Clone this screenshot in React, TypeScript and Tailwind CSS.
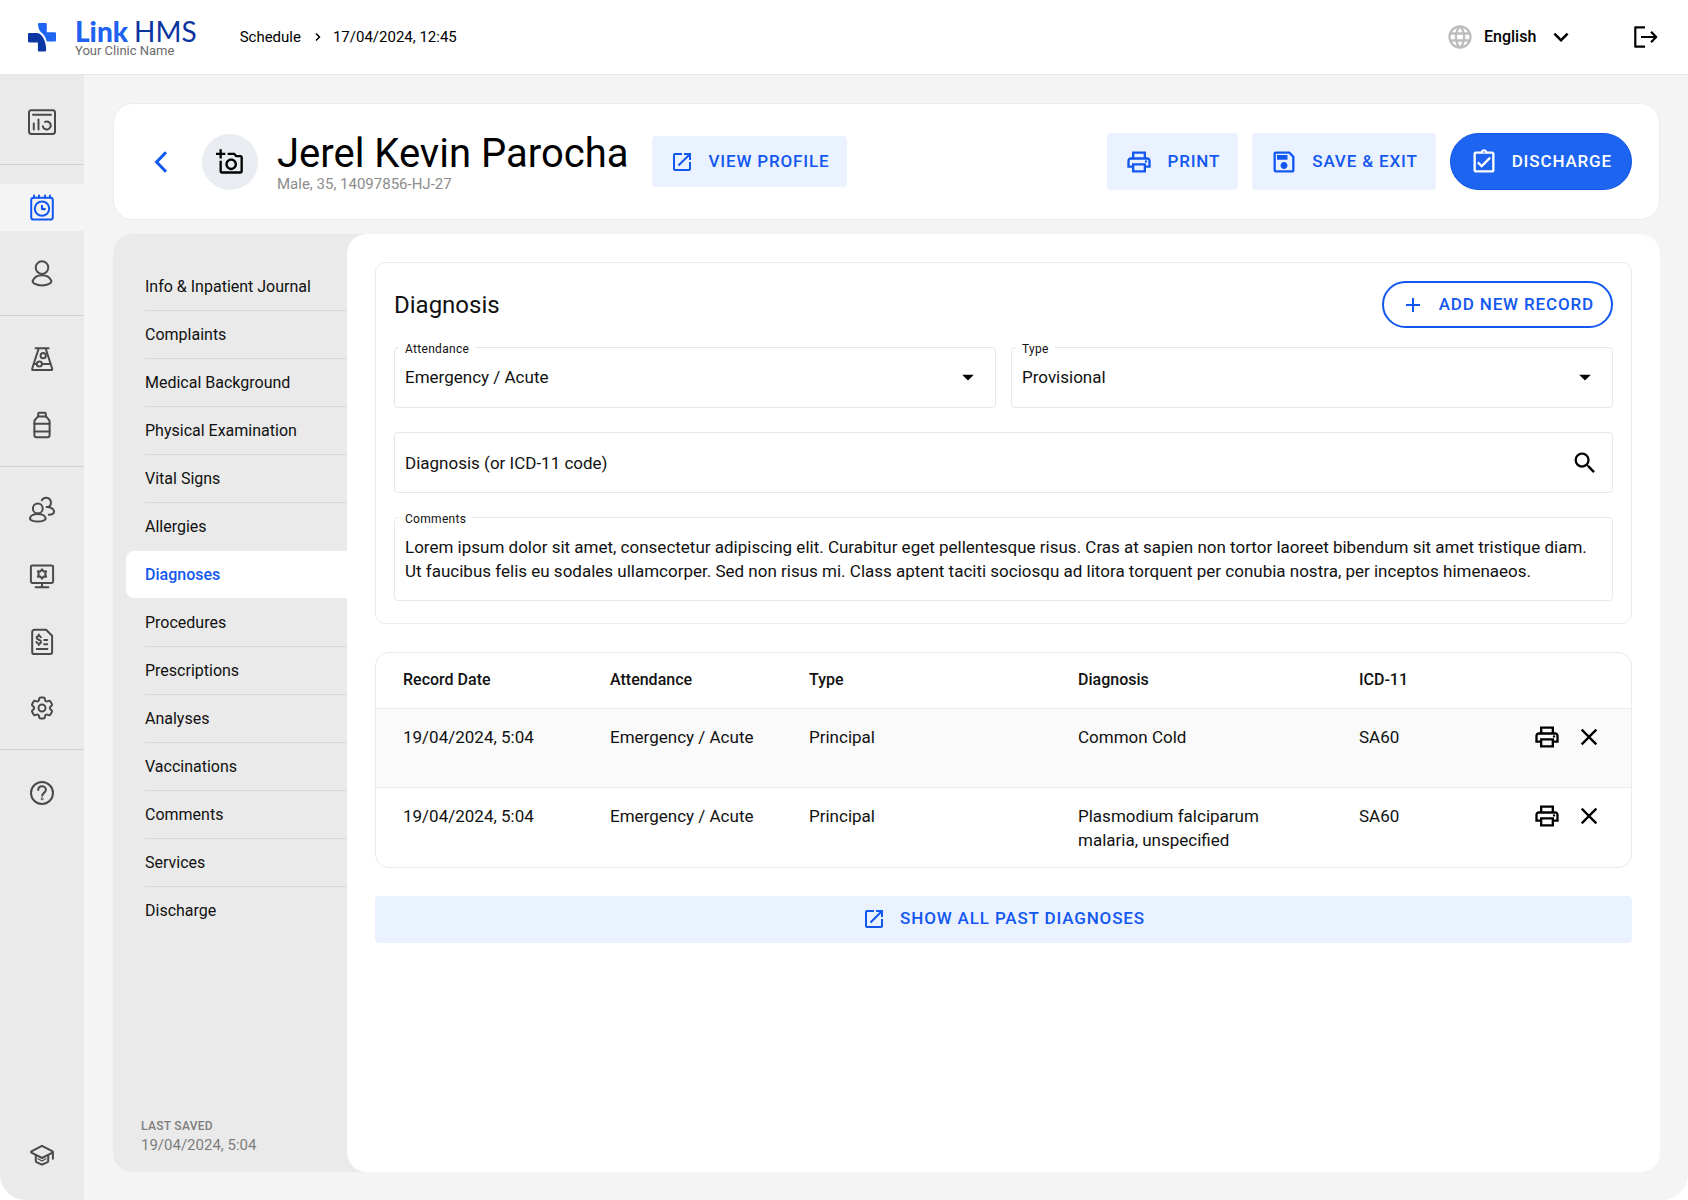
import React from 'react';
import {
  MdAdd,
  MdArrowDropDown,
  MdClose,
  MdKeyboardArrowDown,
  MdLanguage,
  MdOpenInNew,
  MdOutlineAddAPhoto,
  MdOutlineAssignmentTurnedIn,
  MdOutlinePrint,
  MdOutlineSave,
  MdSearch
} from 'react-icons/md';
import { HiOutlineCog6Tooth } from 'react-icons/hi2';

interface DiagnosisRecord {
  date: string;
  attendance: string;
  type: string;
  diagnosis: string;
  code: string;
}

const records: DiagnosisRecord[] = [
  {
    date: '19/04/2024, 5:04',
    attendance: 'Emergency / Acute',
    type: 'Principal',
    diagnosis: 'Common Cold',
    code: 'SA60'
  },
  {
    date: '19/04/2024, 5:04',
    attendance: 'Emergency / Acute',
    type: 'Principal',
    diagnosis: 'Plasmodium falciparum malaria, unspecified',
    code: 'SA60'
  }
];

const sections = [
  'Info & Inpatient Journal',
  'Complaints',
  'Medical Background',
  'Physical Examination',
  'Vital Signs',
  'Allergies',
  'Diagnoses',
  'Procedures',
  'Prescriptions',
  'Analyses',
  'Vaccinations',
  'Comments',
  'Services',
  'Discharge'
];

const activeSection = 'Diagnoses';

const commentText =
  'Lorem ipsum dolor sit amet, consectetur adipiscing elit. Curabitur eget pellentesque risus. Cras at sapien non tortor laoreet bibendum sit amet tristique diam. Ut faucibus felis eu sodales ullamcorper. Sed non risus mi. Class aptent taciti sociosqu ad litora torquent per conubia nostra, per inceptos himenaeos.';

/* Sidebar icons, all on a 28px grid */
const RailIcon: React.FC<{ children: React.ReactNode }> = ({ children }) => (
  <svg
    width="28"
    height="28"
    viewBox="0 0 28 28"
    fill="none"
    stroke="currentColor"
    strokeWidth="2"
    strokeLinecap="round"
    strokeLinejoin="round"
    aria-hidden="true"
  >
    {children}
  </svg>
);

const DashboardIcon = () => (
  <RailIcon>
    <rect x="1" y="1.2" width="26" height="23.8" rx="2.4" />
    <path d="M5 5.8h18M5.8 14.4v6M10.5 10.4v10" />
    <path d="M17 12.9a4 4 0 1 1-2.2 4.3" />
  </RailIcon>
);

const ScheduleIcon = () => (
  <RailIcon>
    <rect x="3.2" y="3.8" width="21.6" height="21.8" rx="2.4" />
    <path d="M6 1.4v2.4M11 1.4v2.4M17 1.4v2.4M22 1.4v2.4" />
    <circle cx="14" cy="14.6" r="7.2" />
    <path d="M14 11.8v3.3h2.8" strokeWidth="2.2" />
  </RailIcon>
);

const PatientIcon = () => (
  <RailIcon>
    <circle cx="14" cy="7.6" r="6.3" />
    <path d="M4.8 20.6c1.4-3.6 5-5.4 9.2-5.4s7.8 1.8 9.2 5.4c.5 1.3-.3 2.3-1.6 3-2.2 1.2-4.8 1.9-7.6 1.9s-5.4-.7-7.6-1.9c-1.3-.7-2.1-1.7-1.6-3z" />
  </RailIcon>
);

const LabIcon = () => (
  <RailIcon>
    <path d="M7.6 3.3h13M10.8 3.3 4.2 23.5c-.3.9.1 1.5 1 1.5h17.9c.9 0 1.3-.6 1-1.5L17.6 3.3" />
    <circle cx="15.2" cy="10.7" r="2.6" />
    <circle cx="11.4" cy="19" r="2.6" />
    <path d="M6 19h2.8M14 19h8" />
  </RailIcon>
);

const BottleIcon = () => (
  <RailIcon>
    <path d="M10.2 5.6V2.8c0-.6.4-1 1-1h5.6c.6 0 1 .4 1 1v2.8" />
    <path d="M9.6 5.6h8.8c.3 1.3 3.2 2.7 3.2 5v13.5c0 1.2-1 2.2-2.2 2.2H8.6c-1.2 0-2.2-1-2.2-2.2V10.6c0-2.3 2.9-3.7 3.2-5z" />
    <path d="M6.4 12.8h15.2M6.4 20.6h15.2" />
  </RailIcon>
);

const StaffIcon = () => (
  <RailIcon>
    <circle cx="9.8" cy="12.4" r="4.9" />
    <path d="M2 22c.8-2.6 4-4 7.8-4s7 1.4 7.8 4c.5 2.2-3.6 3.5-7.8 3.5S1.5 24.2 2 22z" />
    <path d="M13.8 4.3c.9-1.5 2.5-2.5 4.3-2.5a4.9 4.9 0 0 1 2.3 9.2h-1.8" />
    <path d="M20.4 11.3c3 .3 5.2 2 5.7 4.1.4 2-2.2 3.3-5.3 3.3" />
  </RailIcon>
);

const StationIcon = () => (
  <RailIcon>
    <rect x="2.9" y="3.4" width="22.2" height="17.6" rx="1.4" />
    <path d="M14 21v4M7.6 25.2h12.8" />
    <path d="m14 7.4 1.6 2 2.5-.1-.9 2.7.9 2.7-2.5-.1-1.6 2-1.6-2-2.5.1.9-2.7-.9-2.7 2.5.1z" />
  </RailIcon>
);

const BillingIcon = () => (
  <RailIcon>
    <path d="M6.4 1.8h11.7l6 6v16.3c0 1.1-.9 2-2 2H6.4c-1.2 0-2.2-1-2.2-2.2V4c0-1.2 1-2.2 2.2-2.2z" />
    <path d="M12.9 9.3c-.3-.9-1.1-1.4-2.1-1.4-1.2 0-2.1.7-2.1 1.8 0 2.6 4.3 1.4 4.3 4 0 1.1-.9 1.9-2.2 1.9-1.1 0-2-.6-2.3-1.6M10.8 6.5v1.2M10.8 15.8V17" />
    <path d="M16.2 12h3M16.2 16.3h3M8.8 21h10.6" />
  </RailIcon>
);

const HelpIcon = () => (
  <RailIcon>
    <circle cx="14" cy="14" r="11" />
    <path d="M10.2 10.9c.1-2.1 1.7-3.6 3.8-3.6s3.9 1.5 3.9 3.5c0 3-3.7 3.1-3.7 6" />
    <circle cx="14.1" cy="19.9" r=".4" />
  </RailIcon>
);

const AcademyIcon = () => (
  <RailIcon>
    <path d="M14 4.8 3.4 10.4c-.5.3-.5.9 0 1.2L14 17l10.6-5.4c.5-.3.5-.9 0-1.2z" />
    <path d="M24.9 11.5v6.3M7.8 14.2v5.9c0 .5.2.8.6 1l5.6 2.6 5.6-2.6c.4-.2.6-.5.6-1v-5.9" />
    <path d="m10 17.8 4 2.2 4-2.2" strokeWidth="1.2" />
  </RailIcon>
);

const SettingsIcon = () => <HiOutlineCog6Tooth size={28} strokeWidth={1.7} />;

const railGroups = [
  [{ label: 'Dashboard', icon: DashboardIcon }],
  [
    { label: 'Schedule', icon: ScheduleIcon },
    { label: 'Patients', icon: PatientIcon }
  ],
  [
    { label: 'Laboratory', icon: LabIcon },
    { label: 'Pharmacy', icon: BottleIcon }
  ],
  [
    { label: 'Staff', icon: StaffIcon },
    { label: 'Workstations', icon: StationIcon },
    { label: 'Billing', icon: BillingIcon },
    { label: 'Settings', icon: SettingsIcon }
  ],
  [{ label: 'Help', icon: HelpIcon }]
];

const Logo = () => (
  <a href="#home" className="flex items-center">
    <svg width="28" height="29" viewBox="0 0 28 29" className="mr-[19px]" aria-hidden="true">
      <path
        d="M11.2 0h6.4c.7 0 1.2.5 1.2 1.2v8h7.9c.8 0 1.3.5 1.3 1.3v6.7c0 .8-.5 1.3-1.3 1.3h-7.3c-.5 0-.8-.2-.9-.7-.8-3-2-5.3-4-7.2C12 8.5 10.2 6 10 1.4 9.9.6 10.4 0 11.2 0z"
        fill="#1f66f2"
      />
      <path
        d="M1.3 10.1h7.9c4.8 1 8.5 6.7 9 16.2 0 1.5-.6 2.3-1.5 2.3h-5.5c-.8 0-1.3-.5-1.3-1.3v-7.9H1.3C.5 19.4 0 18.9 0 18.1v-6.7c0-.8.5-1.3 1.3-1.3z"
        fill="#0b37a4"
      />
    </svg>
    <span className="flex flex-col">
      <span className="font-['Lato',sans-serif] text-[28px] leading-7">
        <span className="font-black text-[#1f62f2]">Link</span>
        <span className="ml-[6px] text-[#0a34a0]">HMS</span>
      </span>
      <span className="text-[13px] leading-3 text-[#6b6b6b]">Your Clinic Name</span>
    </span>
  </a>
);

const TopBar = () => (
  <header className="flex h-[75px] items-center border-b border-[#e6e6e6] bg-white px-7">
    <Logo />
    <nav aria-label="Breadcrumb" className="ml-[43px] flex items-center text-[15px] text-black">
      <a href="#schedule">Schedule</a>
      <svg width="6" height="10" viewBox="0 0 6 10" className="ml-[14px] mr-3" aria-hidden="true">
        <path d="M1 1.5 4.5 5 1 8.5" fill="none" stroke="currentColor" strokeWidth="1.5" />
      </svg>
      <span>17/04/2024, 12:45</span>
    </nav>
    <div className="ml-auto flex items-center">
      <MdLanguage size={28} className="text-[#bdbdbd]" />
      <div className="relative ml-[10px]">
        <select
          aria-label="Language"
          className="appearance-none bg-transparent pr-[39px] text-base font-medium text-black"
        >
          <option>English</option>
        </select>
        <MdKeyboardArrowDown size={30} className="pointer-events-none absolute right-0 top-1/2 -translate-y-1/2" />
      </div>
      <button type="button" aria-label="Log out" className="ml-14">
        <svg width="28" height="28" viewBox="0 0 28 28" fill="none" stroke="currentColor" strokeWidth="2.2" aria-hidden="true">
          <path d="M13 4.3H3.3v19.4H13M9 14h15M19 8.8l5.2 5.2-5.2 5.2" strokeLinejoin="round" />
        </svg>
      </button>
    </div>
  </header>
);

const SideRail = () => (
  <aside className="flex w-[84px] shrink-0 flex-col bg-[#eaeaea] pb-[22px] pt-[5px] text-[#4a4a4a]">
    {railGroups.map((group, idx) => (
      <ul
        key={idx}
        className="flex flex-col gap-[19px] border-b border-[#d2d2d2] pb-[18px] pt-[19px] last-of-type:border-b-0"
      >
        {group.map(({ label, icon: Icon }) => (
          <li key={label}>
            <a
              href={`#${label.toLowerCase()}`}
              aria-label={label}
              className={
                label === 'Schedule'
                  ? 'flex h-[47px] items-center justify-center bg-[#f4f4f4] text-[#1258f0]'
                  : 'flex h-[47px] items-center justify-center'
              }
            >
              <Icon />
            </a>
          </li>
        ))}
      </ul>
    ))}
    <a href="#academy" aria-label="Academy" className="mt-auto flex h-[47px] items-center justify-center">
      <AcademyIcon />
    </a>
  </aside>
);

const softButton =
  'flex items-center gap-[14px] rounded bg-[#ebf2ff] px-[18px] text-[17px] font-medium tracking-wider text-[#1258f0]';

const PatientHeader = () => (
  <div className="flex items-center rounded-[20px] border border-[#e9edf0] bg-white px-[27px] py-[29px]">
    <button type="button" aria-label="Back" className="flex h-10 w-10 items-center justify-center text-[#1258f0]">
      <svg width="14" height="22" viewBox="0 0 14 22" fill="none" stroke="currentColor" strokeWidth="3" aria-hidden="true">
        <path d="M12 1.2 2.6 11l9.4 9.8" />
      </svg>
    </button>
    <button
      type="button"
      aria-label="Add photo"
      className="ml-[21px] flex h-14 w-14 items-center justify-center rounded-full bg-[#e9edf1] text-black"
    >
      <MdOutlineAddAPhoto size={28} />
    </button>
    <div className="ml-[19px] h-[57px]">
      <h1 className="text-[40px] leading-[42px] text-black">Jerel Kevin Parocha</h1>
      <p className="text-[15px] leading-[18px] text-[#8c8c8c]">Male, 35, 14097856-HJ-27</p>
    </div>
    <button type="button" className={`${softButton} ml-6 h-[51px]`}>
      <MdOpenInNew size={24} />
      VIEW PROFILE
    </button>
    <div className="ml-auto flex gap-[14px]">
      <button type="button" className={`${softButton} h-[57px]`}>
        <MdOutlinePrint size={28} />
        PRINT
      </button>
      <button type="button" className={`${softButton} h-[57px]`}>
        <MdOutlineSave size={28} />
        SAVE &amp; EXIT
      </button>
      <button
        type="button"
        className="flex h-[57px] items-center gap-[14px] rounded-full border border-[#0f55ea] bg-[#1d64f0] px-[19px] text-[17px] font-medium tracking-wider text-white"
      >
        <MdOutlineAssignmentTurnedIn size={28} />
        DISCHARGE
      </button>
    </div>
  </div>
);

const SectionNav = () => (
  <nav aria-label="Record sections" className="flex w-[234px] shrink-0 flex-col pb-[17px] pt-[29px]">
    <ul>
      {sections.map((name, idx) => {
        if (name === activeSection) {
          return (
            <li key={name} className="ml-[13px] h-12 pb-px">
              <a
                href="#diagnoses"
                aria-current="page"
                className="flex h-full items-center rounded-l-lg bg-white pl-[19px] text-base font-medium text-[#1258f0]"
              >
                {name}
              </a>
            </li>
          );
        }
        const hasLine = idx < sections.length - 1 && sections[idx + 1] !== activeSection;
        return (
          <li key={name} className={hasLine ? 'ml-8 h-12 border-b border-[#d8d8d8]' : 'ml-8 h-12'}>
            <a href={`#section-${idx}`} className="flex h-[47px] items-center text-base text-[#111111]">
              {name}
            </a>
          </li>
        );
      })}
    </ul>
    <div className="mt-auto pl-7 text-[#7d7d7d]">
      <p className="text-xs font-medium leading-[18px] tracking-wide">LAST SAVED</p>
      <p className="text-[15px] leading-5">19/04/2024, 5:04</p>
    </div>
  </nav>
);

interface SelectFieldProps {
  id: string;
  label: string;
  value: string;
}

const SelectField: React.FC<SelectFieldProps> = ({ id, label, value }) => (
  <div className="relative">
    <label htmlFor={id} className="absolute -top-[6px] left-[5px] bg-white px-[6px] text-xs leading-4 tracking-wide text-[#111111]">
      {label}
    </label>
    <select
      id={id}
      className="h-[61px] w-full appearance-none rounded border border-[#e8e8e8] bg-white px-[10px] text-[17px] text-[#111111]"
    >
      <option>{value}</option>
    </select>
    <MdArrowDropDown size={28} className="pointer-events-none absolute right-[14px] top-4 text-black" />
  </div>
);

const DiagnosisForm = () => (
  <section className="rounded-[10px] border border-[#e9edf2] px-[18px] pb-[22px] pt-[18px]">
    <div className="flex h-[47px] items-center justify-between">
      <h2 className="text-2xl text-[#111111]">Diagnosis</h2>
      <button
        type="button"
        className="flex h-[47px] items-center gap-[14px] rounded-full border-2 border-[#1258f0] px-[17px] text-[17px] font-medium tracking-wider text-[#1258f0]"
      >
        <MdAdd size={24} />
        ADD NEW RECORD
      </button>
    </div>
    <div className="mt-[19px] grid grid-cols-2 gap-x-[15px] gap-y-6">
      <SelectField id="attendance" label="Attendance" value="Emergency / Acute" />
      <SelectField id="type" label="Type" value="Provisional" />
      <div className="col-span-2 flex h-[61px] items-center rounded border border-[#e8e8e8] pl-[10px] pr-[13px]">
        <input
          type="text"
          aria-label="Diagnosis (or ICD-11 code)"
          placeholder="Diagnosis (or ICD-11 code)"
          className="h-full flex-1 text-[17px] text-[#111111] outline-none placeholder:text-[#111111]"
        />
        <button type="button" aria-label="Search" className="text-black">
          <MdSearch size={28} />
        </button>
      </div>
      <div className="relative col-span-2">
        <label htmlFor="comments" className="absolute -top-[6px] left-[5px] bg-white px-[6px] text-xs leading-4 tracking-wide text-[#111111]">
          Comments
        </label>
        <textarea
          id="comments"
          defaultValue={commentText}
          className="block h-[84px] w-full resize-none overflow-hidden rounded border border-[#e8e8e8] pl-[10px] pr-3 pt-[17px] text-[17px] leading-6 text-[#111111]"
        />
      </div>
    </div>
  </section>
);

const RecordsTable = () => (
  <div className="mt-7 overflow-hidden rounded-[14px] border border-[#e7ecef]">
    <table className="w-full table-fixed text-left text-[17px] text-[#111111]">
      <thead>
        <tr className="h-[55px] text-base">
          <th className="w-[234px] pl-[27px] font-medium">Record Date</th>
          <th className="w-[199px] font-medium">Attendance</th>
          <th className="w-[269px] font-medium">Type</th>
          <th className="w-[281px] font-medium">Diagnosis</th>
          <th className="font-medium">ICD-11</th>
          <th className="w-[112px]"></th>
        </tr>
      </thead>
      <tbody>
        {records.map((record, idx) => (
          <tr key={idx} className="h-[79px] border-t border-[#e9edef] align-top leading-6 odd:bg-[#fafafa]">
            <td className="pl-[27px] pt-4">{record.date}</td>
            <td className="pt-4">{record.attendance}</td>
            <td className="pt-4">{record.type}</td>
            <td className="pb-[15px] pr-20 pt-4">{record.diagnosis}</td>
            <td className="pt-4">{record.code}</td>
            <td className="pr-7 pt-[14px]">
              <div className="flex justify-end gap-[14px] text-black">
                <button type="button" aria-label="Print record">
                  <MdOutlinePrint size={28} />
                </button>
                <button type="button" aria-label="Delete record">
                  <MdClose size={28} />
                </button>
              </div>
            </td>
          </tr>
        ))}
      </tbody>
    </table>
  </div>
);

const App: React.FC = () => {
  return (
    <div className="bg-white font-['Roboto',sans-serif]">
      <div className="flex min-h-screen flex-col overflow-hidden rounded-[26px] bg-[#f4f4f4]">
        <TopBar />
        <div className="flex flex-1">
          <SideRail />
          <main className="flex min-w-0 flex-1 flex-col gap-[14px] py-7 pl-[29px] pr-7">
            <PatientHeader />
            <div className="flex flex-1 rounded-[20px] bg-[#eaeaea]">
              <SectionNav />
              <div className="min-w-0 flex-1 rounded-[20px] bg-white p-7">
                <DiagnosisForm />
                <RecordsTable />
                <button
                  type="button"
                  className={`${softButton} mt-7 h-[47px] w-full justify-center`}
                >
                  <MdOpenInNew size={24} />
                  SHOW ALL PAST DIAGNOSES
                </button>
              </div>
            </div>
          </main>
        </div>
      </div>
    </div>
  );
};

export default App;
